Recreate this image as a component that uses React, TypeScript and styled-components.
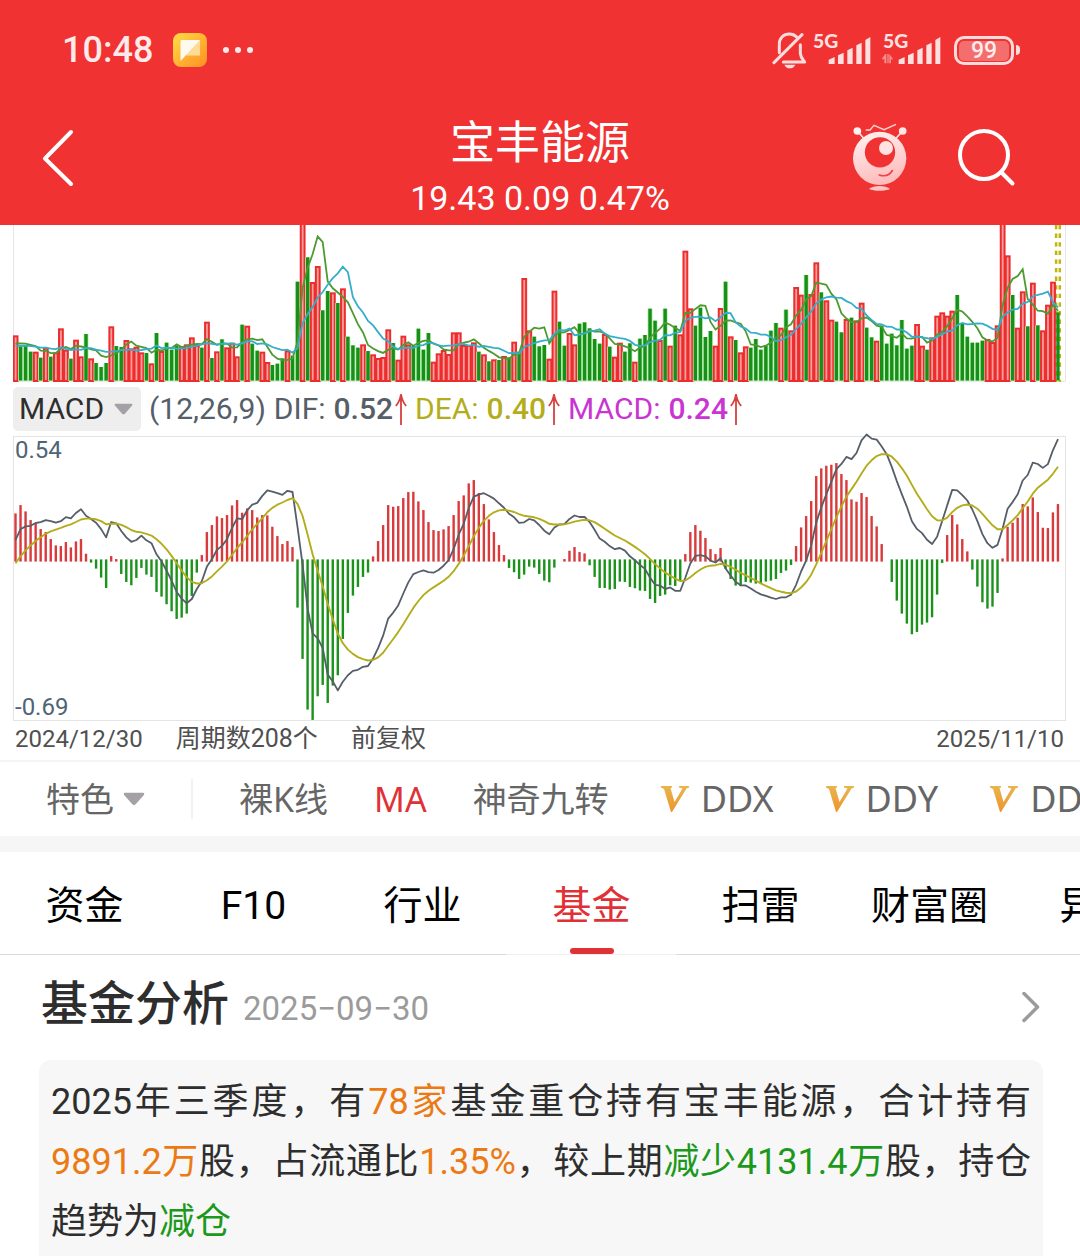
import React, { useState } from "react";
import styled, { createGlobalStyle } from "styled-components";

const LATIN_CJK = 'Roboto, "Noto Sans CJK SC", sans-serif';
const WIDE_CJK = '"Noto Sans", "Noto Sans CJK SC", sans-serif';

const GlobalStyle = createGlobalStyle`
  *, *::before, *::after { box-sizing: border-box; }
  html { scrollbar-width: none; }
  body { margin: 0; background: #fff; font-family: ${LATIN_CJK}; color: #2e2e2e; overflow-x: hidden; }
  button, select { font: inherit; color: inherit; border: 0; background: none; padding: 0; margin: 0; cursor: pointer; }
  h1, h2, p { margin: 0; font-weight: 400; }
  svg { display: block; flex: none; }
`;

/* ---------- market data: one entry per trading day, sign = up / down day ---------- */

const VOLUME = [
  137, -104, -106, -88, 88, -70, 100, -73, 86, 158, 94, -67, 124, 74, -141, 68, -54, -42, -54, 164,
  -105, -102, 123, 98, 103, 86, -84, 53, -144, 90, -115, -94, -106, 103, 110, 131, 108, -100, 178, -69,
  89, -125, 101, 115, 74, -169, 166, -112, -91, 88, 57, -48, -52, -68, 92, -76, -298, 859, -371, 297,
  345, -212, -270, 266, -234, 278, -133, -107, -100, 110, -90, 80, 69, 72, 155, -114, 64, 136, 110, -106,
  -157, -94, -144, 58, 83, 93, 81, 146, 146, 108, 108, 116, -88, 80, -59, 65, -63, 75, -71, 118,
  -88, 309, 152, -133, -104, -108, 67, 271, -178, -106, 144, 110, -172, -176, -158, -126, -112, 141, -103, 73,
  115, -88, -113, 58, -127, -138, -217, -181, 123, -217, 106, -166, 140, 391, 218, -166, -220, -132, -150, 106,
  219, -298, 134, -123, 86, 104, -100, -126, -94, -106, -151, -174, 160, -214, 152, 282, 259, -318, 261, 356,
  -266, 242, 184, -178, -146, 186, -190, 182, 235, -160, -131, 121, -166, -112, -142, -107, -183, -97, -106, 171,
  106, -94, 131, 196, 206, 196, 211, -258, -171, -133, -115, -115, -121, 126, 117, 167, 611, 377, -258, 160,
  269, -164, 295, -167, 152, 229, 298, -206,
];

const HISTOGRAM = [
  138, 163, 144, 118, 108, 91, 82, 61, 42, 40, 52, 36, 54, 61, 17, -3, -21, -48, -79, 10,
  1, -37, -61, -71, -49, -19, -39, -46, -91, -105, -128, -149, -172, -168, -156, -103, -33, 13, 82, 103,
  129, 124, 133, 162, 178, 140, 153, 148, 126, 133, 132, 98, 70, 46, 55, 37, -138, -292, -444, -475,
  -404, -370, -424, -372, -341, -232, -154, -102, -76, -46, -33, 9, 55, 103, 163, 158, 160, 184, 202, 203,
  174, 148, 112, 88, 85, 90, 100, 133, 175, 192, 228, 238, 199, 166, 120, 82, 43, 13, -19, -32,
  -52, -39, -15, -18, -37, -57, -62, -18, 0, 1, 26, 37, 22, 18, -11, -46, -79, -79, -84, -82,
  -60, -61, -76, -80, -87, -88, -112, -124, -103, -99, -71, -73, -58, 16, 82, 103, 86, 64, 31, 16,
  34, -22, -52, -72, -74, -61, -63, -66, -66, -60, -57, -52, -34, -27, -10, 40, 96, 130, 175, 250,
  273, 281, 284, 289, 256, 238, 180, 173, 199, 187, 130, 99, 46, 0, -61, -117, -156, -186, -218, -211,
  -189, -183, -167, -99, -4, 73, 133, 105, 61, 24, -24, -75, -122, -141, -135, -94, 3, 98, 110, 125,
  166, 159, 186, 142, 95, 94, 141, 166,
];

const DEA_KNOTS: [number, number][] = [
  [0, -8], [13, 123], [20, 111], [28, 64], [36, -69], [45, 54], [55, 187], [65, -248],
  [70, -300], [77, -191], [86, -49], [97, 152], [106, 110], [113, 122], [124, 30], [133, -60],
  [140, -10], [154, -98], [173, 319], [184, 120], [189, 168], [196, 94], [207, 281],
];

const UNIT = 3;
const CHART_W = 1053;
const FIRST_X = 2.5;
const STEP = 5.036;
const xAt = (i: number) => FIRST_X + STEP * i;

function movingAverage(days: number, before: number): number[] {
  return VOLUME.map((_, i) => {
    let sum = 0;
    for (let k = 0; k < days; k++) sum += i - k >= 0 ? Math.abs(VOLUME[i - k]) : before;
    return sum / days;
  });
}

function buildDea(): number[] {
  const out: number[] = [DEA_KNOTS[0][1]];
  for (let k = 1; k < DEA_KNOTS.length; k++) {
    const [from, start] = DEA_KNOTS[k - 1];
    const [to, end] = DEA_KNOTS[k];
    let drift = start;
    for (let i = from + 1; i <= to; i++) drift += HISTOGRAM[i] / 8;
    const fix = (end - drift) / (to - from);
    for (let i = from + 1; i <= to; i++) out[i] = out[i - 1] + HISTOGRAM[i] / 8 + fix;
  }
  return out;
}

const toPoints = (values: number[], zero: number) =>
  values.map((v, i) => `${xAt(i).toFixed(1)},${(zero - v / UNIT).toFixed(1)}`).join(" ");

const MA5 = movingAverage(5, 107);
const MA10 = movingAverage(10, 102);
const DEA = buildDea();
const DIF = DEA.map((v, i) => v + HISTOGRAM[i] / 2);

/* ---------- styled parts ---------- */

const Page = styled.main`
  width: 100%;
  overflow: hidden;
`;

const RedTop = styled.header`
  background: #f03232;
  color: #fff;
`;

const StatusBar = styled.div`
  display: flex;
  align-items: center;
  justify-content: space-between;
  height: 100px;
  padding: 0 60px 0 62px;
`;

const StatusGroup = styled.div<{ $gap: number }>`
  display: flex;
  align-items: center;
  gap: ${(p) => p.$gap}px;
`;

const Clock = styled.time`
  font-size: 36px;
  font-weight: 500;
  line-height: 40px;
  color: #ffe9e9;
  margin-right: 5px;
`;

const Battery = styled.div`
  display: flex;
  align-items: center;
  gap: 2px;
  margin-left: 7px;
  &::after {
    content: "";
    width: 4px;
    height: 10px;
    border-radius: 0 4px 4px 0;
    background: #ffdcdc;
  }
`;

const BatteryBody = styled.span`
  width: 60px;
  height: 29px;
  padding: 2px;
  border: 3px solid #ffdcdc;
  border-radius: 10px;
`;

const BatteryLevel = styled.span`
  display: block;
  border-radius: 5px;
  background: #f46e6e;
  color: #ffecec;
  font-size: 23px;
  font-weight: 500;
  line-height: 20px;
  text-align: center;
`;

const NavBar = styled.div`
  display: grid;
  grid-template-columns: 1fr auto 1fr;
  align-items: start;
  padding: 0 42px;
`;

const NavActions = styled.div<{ $end?: boolean }>`
  display: flex;
  justify-content: ${(p) => (p.$end ? "flex-end" : "flex-start")};
  gap: 50px;
  padding-right: ${(p) => (p.$end ? 22 : 0)}px;
`;

const IconButton = styled.button`
  display: flex;
  align-items: center;
  height: 115px;
`;

const TitleBlock = styled.div`
  padding-top: 17px;
  text-align: center;
`;

const StockName = styled.h1`
  font-size: 45px;
  line-height: 54px;
`;

const Quote = styled.p`
  font-size: 34px;
  line-height: 54px;
`;

const ChartSection = styled.section`
  padding: 0 14px 0 13px;
`;

const ChartSvg = styled.svg`
  width: 100%;
  height: auto;
`;

const IndicatorRow = styled.div`
  display: flex;
  align-items: center;
  height: 54px;
  font-size: 30px;
  line-height: 44px;
  gap: 8px;
  white-space: nowrap;
`;

const SelectBox = styled.label<{ $filled?: boolean }>`
  display: grid;
  grid-template-columns: auto auto;
  align-items: center;
  flex: none;
  gap: 9px;
  padding: ${(p) => (p.$filled ? "0 8px 0 6px" : "0")};
  border-radius: 5px;
  background: ${(p) => (p.$filled ? "#eeeeee" : "none")};
`;

const PlainSelect = styled.select`
  appearance: none;
  outline: none;
`;

const Reading = styled.span<{ $color: string }>`
  display: flex;
  align-items: center;
  gap: 2px;
  color: ${(p) => p.$color};
`;

const ReadingValue = styled.b`
  font-weight: 500;
  margin-left: 6px;
`;

const Params = styled.span`
  color: #555e69;
`;

const MacdFrame = styled.div`
  position: relative;
  border: 1px solid #e4e4e6;
  svg {
    overflow: visible;
  }
`;

const AxisLabel = styled.span<{ $bottom?: boolean }>`
  position: absolute;
  left: 1px;
  ${(p) => (p.$bottom ? "bottom: 0;" : "top: 0;")}
  font-size: 24px;
  line-height: 26px;
  color: #4f6475;
`;

const PeriodRow = styled.div`
  display: flex;
  align-items: center;
  gap: 33px;
  height: 39px;
  padding: 0 2px 4px;
  font-size: 25px;
  line-height: 34px;
  color: #505050;
`;

const DateText = styled.time<{ $end?: boolean }>`
  font-size: 24px;
  margin-left: ${(p) => (p.$end ? "auto" : "0")};
`;

const FeatureBar = styled.nav`
  display: flex;
  align-items: center;
  height: 76px;
  padding-left: 46px;
  border-top: 2px solid #f4f4f4;
  color: #666;
  font-family: ${WIDE_CJK};
  font-size: 34px;
  line-height: 48px;
  white-space: nowrap;
`;

const FeatureList = styled.div`
  display: flex;
  gap: 46px;
  margin-left: 46px;
  padding-left: 46px;
  border-left: 2px solid #f2f2f2;
  line-height: 40px;
`;

const FeatureButton = styled.button<{ $active?: boolean; $vip?: boolean }>`
  display: flex;
  align-items: center;
  flex: none;
  gap: 12px;
  margin-left: ${(p) => (p.$vip ? 6 : 0)}px;
  font-size: ${(p) => (p.$vip ? 36 : 34)}px;
  color: ${(p) => (p.$active ? "#e03236" : "inherit")};
`;

const Divider = styled.div`
  height: 16px;
  background: #f6f6f6;
`;

const TabBar = styled.nav`
  display: flex;
`;

const Tab = styled.button<{ $active: boolean }>`
  display: flex;
  flex-direction: column;
  align-items: center;
  justify-content: flex-end;
  flex: none;
  width: 169px;
  height: 103px;
  border-bottom: 1px solid ${(p) => (p.$active ? "#f0f0f0" : "#dcdcdc")};
  font-size: 39px;
  line-height: 54px;
  color: ${(p) => (p.$active ? "#e03236" : "#000")};
  &::after {
    content: "";
    width: 44px;
    height: 6px;
    margin-top: 15px;
    border-radius: 3px;
    background: ${(p) => (p.$active ? "#e03236" : "transparent")};
  }
`;

const FundSection = styled.section`
  padding: 0 37px 0 39px;
`;

const FundHead = styled.a`
  display: flex;
  align-items: baseline;
  gap: 14px;
  padding: 14px 2px 21px;
  color: #2e2e2e;
  text-decoration: none;
`;

const FundTitle = styled.h2`
  font-size: 47px;
  font-weight: 500;
  line-height: 70px;
`;

const FundDate = styled.time`
  font-size: 33px;
  color: #9b9b9b;
`;

const Chevron = styled.svg`
  margin: 5px 0 0 auto;
  align-self: center;
`;

const SummaryCard = styled.p`
  padding: 12px 12px 24px;
  border-radius: 12px;
  background: #f7f7f7;
  font-size: 36px;
  line-height: 60px;
  text-align: justify;
`;

const Mark = styled.em<{ $tone: "up" | "down" }>`
  font-style: normal;
  color: ${(p) => (p.$tone === "up" ? "#ec7a14" : "#1c991c")};
`;

/* ---------- icons ---------- */

const AppBadge = () => (
  <svg width="34" height="34" viewBox="0 0 34 34">
    <defs>
      <linearGradient id="badge" x1="0" y1="0" x2="1" y2="1">
        <stop offset="0" stopColor="#ffdc46" />
        <stop offset="1" stopColor="#ff8f22" />
      </linearGradient>
    </defs>
    <rect width="34" height="34" rx="8" fill="url(#badge)" />
    <path d="M8 7H27V22.5H13z" fill="#ffdb98" />
    <path d="M8.5 7H27L7.500 28V8z" fill="#fffaf0" />
  </svg>
);

const Dots = () => (
  <svg width="32" height="8" viewBox="0 0 32 8" fill="#ffe9e9">
    <circle cx="4" cy="4" r="3" />
    <circle cx="16" cy="4" r="3" />
    <circle cx="28" cy="4" r="3" />
  </svg>
);

const MutedBell = () => (
  <svg width="35" height="37" viewBox="95 94 105 111" fill="none" stroke="#ffdcdc" strokeWidth="9" strokeLinecap="round" strokeLinejoin="round">
    <path d="M117 156V131C117 112 130 100 147 100C157 100 164 104 169 109" />
    <path d="M180 132V158C181 171 188 177 193 184H129" />
    <path d="M185 102L101 186" />
    <path d="M132 192H165C162 199 156 203 148 203C141 203 135 199 132 192z" fill="#ffdcdc" stroke="none" />
  </svg>
);

const Signal = ({ data }: { data?: boolean }) => (
  <svg width="60" height="52" viewBox="216 70 180 156" fill="#ffdfdf">
    <text x="219" y="143" fontFamily="Lato, sans-serif" fontSize="58" fontWeight="900">5G</text>
    <path d="M266 190V177L284 169V190zM294 190V164L311 156V190zM322 190V149L338 141V190zM349 190V134L365 126V190zM376 190V118L391 109V190z" />
    {data && <path d="M214 176L226 160H229V188H223V176zM238 160L250 176H243V188H238zM232 160H236V188H232z" fill="#f78d8d" />}
  </svg>
);

const BackIcon = () => (
  <svg width="34" height="58" viewBox="0 0 34 58" fill="none" stroke="#fff" strokeWidth="4" strokeLinecap="round" strokeLinejoin="round">
    <path d="M29 3L3 29.500L29 55" />
  </svg>
);

const Mascot = () => (
  <svg width="56" height="69" viewBox="335 370 168 207">
    <defs>
      <linearGradient id="mascot" x1="0" y1="0" x2="0.300" y2="1">
        <stop offset="0" stopColor="#fff4f4" />
        <stop offset="1" stopColor="#ffbdbd" />
      </linearGradient>
    </defs>
    <path d="M351 394L372 418M487 394L465 418" stroke="#ffe3e3" strokeWidth="5" />
    <circle cx="351" cy="394" r="11.500" fill="#fff0f0" />
    <circle cx="487" cy="394" r="11.500" fill="#ffe6e6" />
    <path d="M376 391H389L401 377L431 390L467 374" fill="none" stroke="#ffd3d3" strokeWidth="4" />
    <circle cx="418" cy="476" r="80" fill="url(#mascot)" />
    <circle cx="419" cy="458" r="45.500" fill="#f03232" />
    <circle cx="437" cy="445" r="21" fill="#ffe3e3" />
    <path d="M415 525C433 532 448 527 457 511" fill="none" stroke="#e8474a" strokeWidth="5" />
    <path d="M386 568C398 556 437 556 449 568C435 575 400 575 386 568z" fill="#ffc4c4" />
  </svg>
);

const SearchIcon = () => (
  <svg width="58" height="58" viewBox="0 0 58 58" fill="none" stroke="#fff" strokeWidth="4" strokeLinecap="round">
    <circle cx="26" cy="26" r="24" />
    <path d="M43 43L54.500 54.500" />
  </svg>
);

const Caret = ({ size }: { size: number }) => (
  <svg width={size} height={size * 0.62} viewBox="0 0 20 12">
    <path d="M1.500 0.500H18.500Q20 1 19 2.500L11.500 11Q10 12.500 8.500 11L1 2.500Q0 1 1.500 0.500z" fill="#a3a1a5" />
  </svg>
);

const UpArrow = () => (
  <svg width="12" height="34" viewBox="0 0 12 34" fill="none" stroke="#d8403f" strokeWidth="1.800">
    <path d="M6 33V2M0.800 14C3.500 11 5.300 7 6 2C6.700 7 8.500 11 11.200 14" />
  </svg>
);

const VipMark = () => (
  <svg width="28" height="27" viewBox="0 0 28 27">
    <defs>
      <linearGradient id="vip" x1="0" y1="0" x2="0" y2="1">
        <stop offset="0" stopColor="#e9b54c" />
        <stop offset="1" stopColor="#ec952f" />
      </linearGradient>
    </defs>
    <path d="M0 0H11V1.500L9.500 2L13.500 16L21.500 2.500L18 1.500V0H28V1.500L25.500 2.500L11 26H10L3 3L0 1.500z" fill="url(#vip)" />
  </svg>
);

/* ---------- charts ---------- */

const VOL_H = 157;
const VOL_BASE = 156;
const LAST_X = xAt(207);

const VolumeChart = () => (
  <ChartSvg viewBox={`0 0 ${CHART_W} ${VOL_H}`} role="img" aria-label="成交量">
    <path d={`M0.500 0V${VOL_H - 0.5}H${CHART_W - 0.5}V0`} fill="none" stroke="#e8e6e8" />
    <path d={`M${LAST_X} 0V${VOL_H}`} stroke="#efe98e" strokeWidth="6" strokeDasharray="4.300 4.300" />
    <path d={`M${LAST_X - 2} 0V${VOL_H}M${LAST_X + 2} 0V${VOL_H}`} stroke="#bdb41e" strokeWidth="2.200" strokeDasharray="4.300 4.300" />
    {VOLUME.map((v, i) => {
      const h = Math.abs(v) / UNIT;
      const x = xAt(i);
      return v < 0 ? (
        <g key={i}>
          {i < 207 && <rect x={x - 2.5} y={VOL_BASE - h} width="5" height={h} fill="#b4f0ae" />}
          <rect x={x - 1.7} y={VOL_BASE - h} width="3.400" height={h - 0.5} fill="#188f18" />
        </g>
      ) : (
        <rect key={i} x={x - 1.8} y={VOL_BASE - h + 1} width="3.800" height={h - 1} fill="#ff9d9d" stroke="#ea2e2e" strokeWidth="2" />
      );
    })}
    <polyline points={toPoints(MA5, VOL_BASE)} fill="none" stroke="#4d9a30" strokeWidth="1.800" />
    <polyline points={toPoints(MA10, VOL_BASE)} fill="none" stroke="#35aecb" strokeWidth="1.800" />
  </ChartSvg>
);

const MACD_H = 283;
const MACD_ZERO = 123.5;

const MacdChart = () => (
  <ChartSvg viewBox={`0 0 ${CHART_W - 2} ${MACD_H}`} role="img" aria-label="MACD">
    <g transform="translate(-1 0)">
      {HISTOGRAM.map((v, i) => {
        const h = Math.abs(v) / UNIT + (v ? 2.2 : 0);
        return (
          <rect
            key={i}
            x={xAt(i) - 1.2}
            y={v > 0 ? MACD_ZERO + 1.1 - h : MACD_ZERO - 1.1}
            width="2.400"
            height={h}
            fill={v > 0 ? "#d93a3c" : "#1b921b"}
          />
        );
      })}
      <polyline points={toPoints(DIF, MACD_ZERO)} fill="none" stroke="#555e69" strokeWidth="1.800" strokeLinejoin="round" />
      <polyline points={toPoints(DEA, MACD_ZERO)} fill="none" stroke="#b3ad1c" strokeWidth="1.900" strokeLinejoin="round" />
    </g>
  </ChartSvg>
);

/* ---------- screen ---------- */

const READINGS = [
  { name: "DIF:", value: "0.52", color: "#555e69" },
  { name: "DEA:", value: "0.40", color: "#b3ad1c" },
  { name: "MACD:", value: "0.24", color: "#c935d2" },
];

const FEATURES = [
  { name: "裸K线" },
  { name: "MA" },
  { name: "神奇九转" },
  { name: "DDX", vip: true },
  { name: "DDY", vip: true },
  { name: "DDZ", vip: true },
];

const TABS = ["资金", "F10", "行业", "基金", "扫雷", "财富圈", "异动"];

export default function App() {
  const [feature, setFeature] = useState("MA");
  const [tab, setTab] = useState("基金");

  return (
    <Page lang="zh-CN">
      <GlobalStyle />
      <RedTop>
        <StatusBar>
          <StatusGroup $gap={15}>
            <Clock>10:48</Clock>
            <AppBadge />
            <Dots />
          </StatusGroup>
          <StatusGroup $gap={5}>
            <MutedBell />
            <StatusGroup $gap={10}>
              <Signal />
              <Signal data />
            </StatusGroup>
            <Battery>
              <BatteryBody>
                <BatteryLevel>99</BatteryLevel>
              </BatteryBody>
            </Battery>
          </StatusGroup>
        </StatusBar>
        <NavBar>
          <NavActions>
            <IconButton aria-label="返回">
              <BackIcon />
            </IconButton>
          </NavActions>
          <TitleBlock>
            <StockName>宝丰能源</StockName>
            <Quote>19.43 0.09 0.47%</Quote>
          </TitleBlock>
          <NavActions $end>
            <IconButton aria-label="助手">
              <Mascot />
            </IconButton>
            <IconButton aria-label="搜索">
              <SearchIcon />
            </IconButton>
          </NavActions>
        </NavBar>
      </RedTop>

      <ChartSection>
        <VolumeChart />
        <IndicatorRow>
          <SelectBox $filled>
            <PlainSelect aria-label="指标">
              <option>MACD</option>
            </PlainSelect>
            <Caret size={19} />
          </SelectBox>
          <Params>(12,26,9)</Params>
          {READINGS.map((r) => (
            <Reading key={r.name} $color={r.color}>
              {r.name}
              <ReadingValue>{r.value}</ReadingValue>
              <UpArrow />
            </Reading>
          ))}
        </IndicatorRow>
        <MacdFrame>
          <MacdChart />
          <AxisLabel>0.54</AxisLabel>
          <AxisLabel $bottom>-0.69</AxisLabel>
        </MacdFrame>
        <PeriodRow>
          <DateText>2024/12/30</DateText>
          <span>周期数208个</span>
          <span>前复权</span>
          <DateText $end>2025/11/10</DateText>
        </PeriodRow>
      </ChartSection>

      <FeatureBar>
        <SelectBox>
          <PlainSelect aria-label="特色指标">
            <option>特色</option>
          </PlainSelect>
          <Caret size={22} />
        </SelectBox>
        <FeatureList>
          {FEATURES.map((f) => (
            <FeatureButton key={f.name} $vip={f.vip} $active={f.name === feature} onClick={() => setFeature(f.name)}>
              {f.vip && <VipMark />}
              {f.name}
            </FeatureButton>
          ))}
        </FeatureList>
      </FeatureBar>
      <Divider />

      <TabBar>
        {TABS.map((t) => (
          <Tab key={t} $active={t === tab} onClick={() => setTab(t)}>
            {t}
          </Tab>
        ))}
      </TabBar>

      <FundSection>
        <FundHead href="#fund">
          <FundTitle>基金分析</FundTitle>
          <FundDate>2025−09−30</FundDate>
          <Chevron width="20" height="32" viewBox="0 0 20 32" fill="none" stroke="#9b9b9b" strokeWidth="3.500" strokeLinecap="round" strokeLinejoin="round">
            <path d="M3 2.500L16.500 16L3 29.500" />
          </Chevron>
        </FundHead>
        <SummaryCard>
          2025年三季度，有<Mark $tone="up">78家</Mark>基金重仓持有宝丰能源，合计持有
          <Mark $tone="up">9891.2万</Mark>股，占流通比<Mark $tone="up">1.35%</Mark>，较上期
          <Mark $tone="down">减少4131.4万</Mark>股，持仓趋势为<Mark $tone="down">减仓</Mark>
        </SummaryCard>
      </FundSection>
    </Page>
  );
}
